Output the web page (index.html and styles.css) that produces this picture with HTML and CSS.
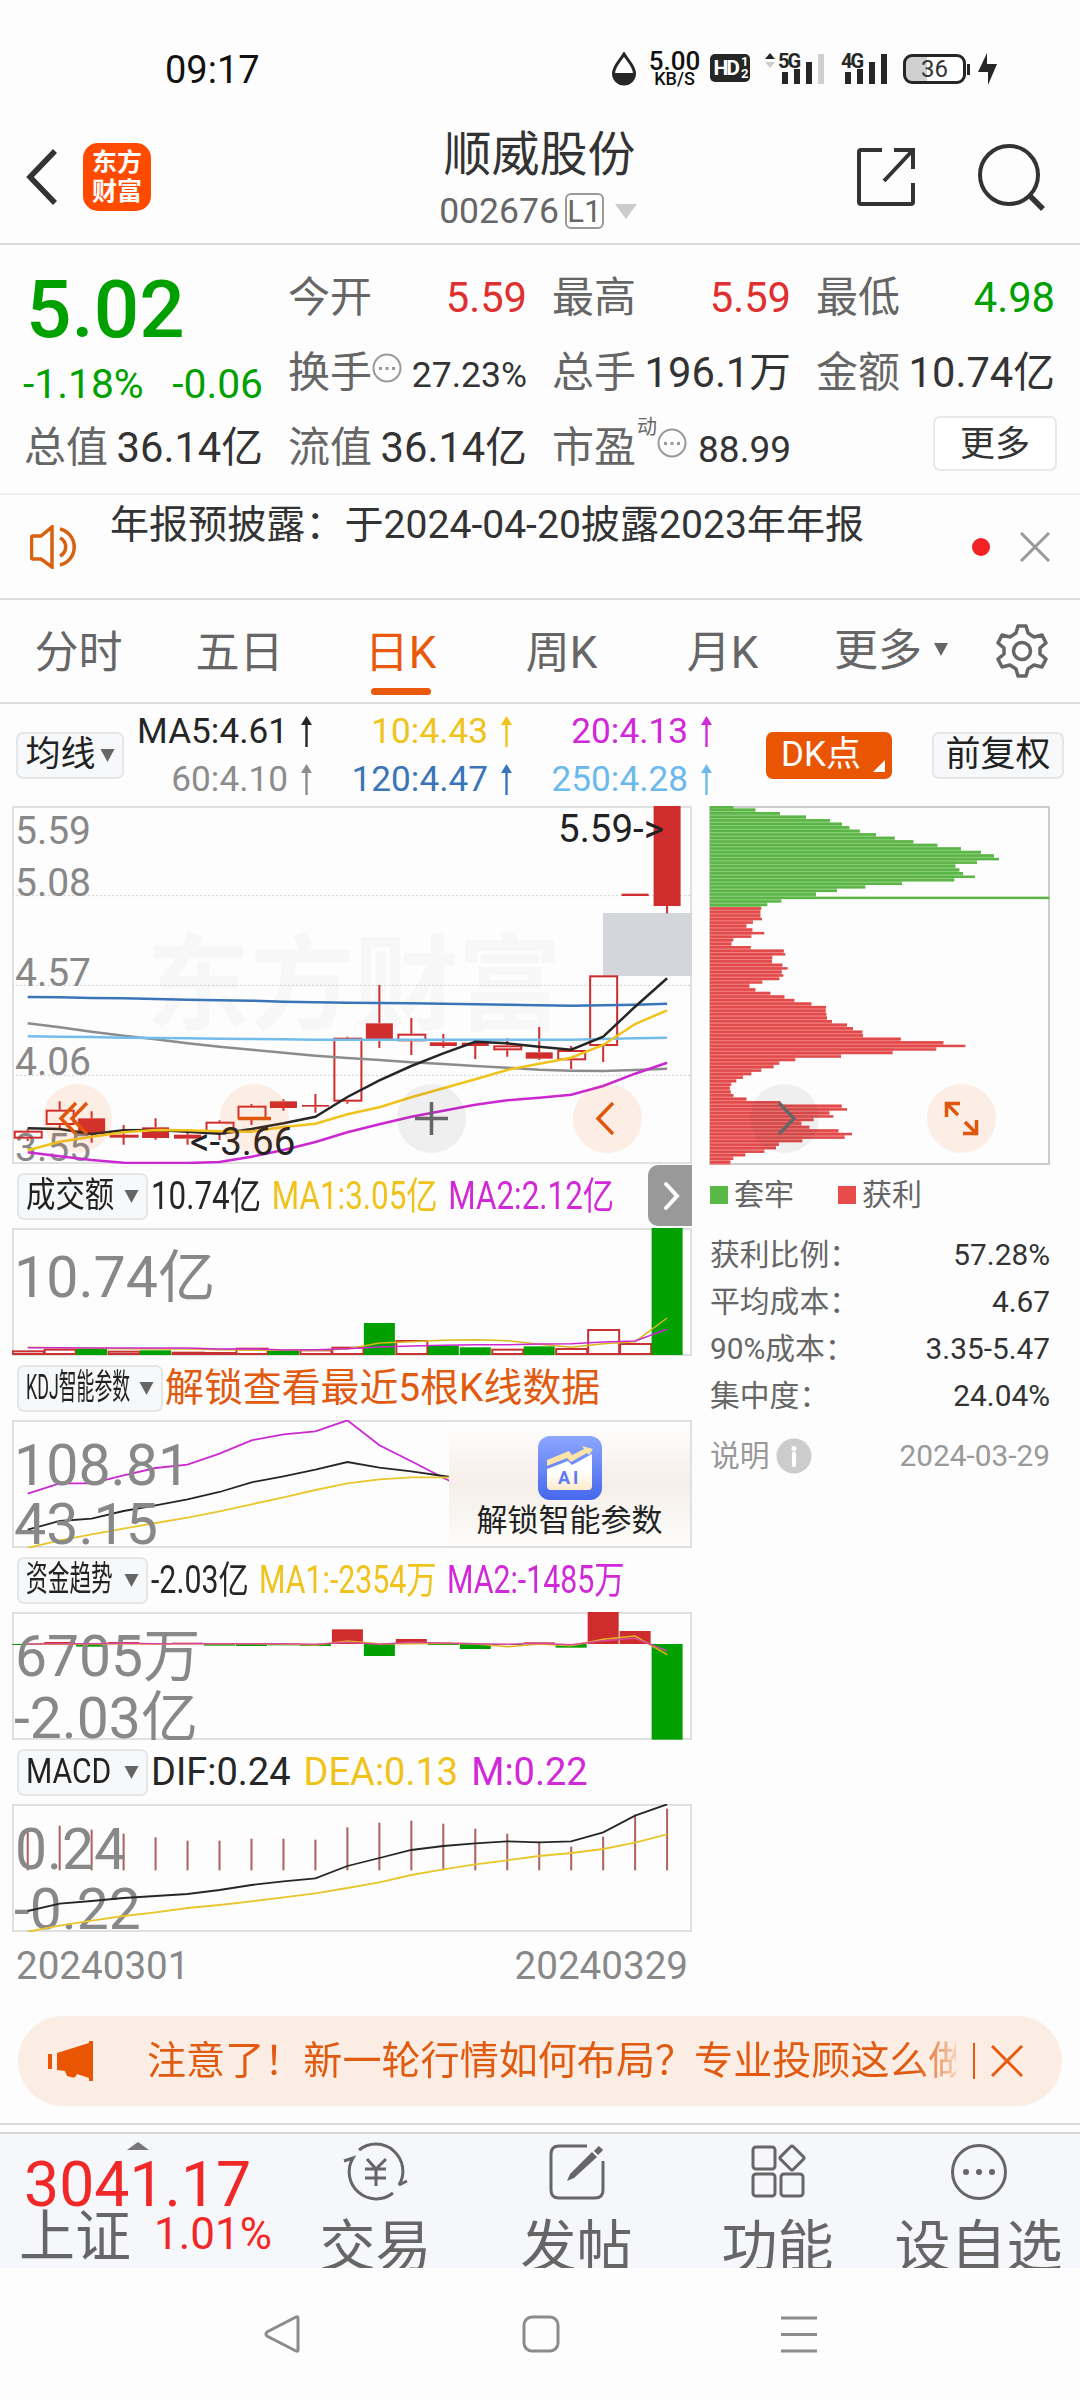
FILE: index.html
```
<!DOCTYPE html>
<html lang="zh-CN">
<head>
  <meta charset="UTF-8">
  <meta name="viewport" content="width=device-width, initial-scale=1.0">
  <title>顺威股份 002676</title>
  <link rel="stylesheet" href="styles.css">
</head>
<body>
  <!-- Status bar -->
  <div class="status-bar">
    <span class="clock">09:17</span>
    <div class="status-icons">
      <svg class="drop" width="26" height="34" viewBox="0 0 26 34">
        <path d="M13 2C9 9 2.500 14 2.500 21.500a10.500 10.500 0 0 0 21 0C23.500 14 17 9 13 2z" fill="#fff" stroke="#262626" stroke-width="3"/>
        <path d="M2 21h22a11 11 0 0 1-22 0z" fill="#262626"/>
      </svg>
      <div class="net-speed"><b>5.00</b><i>KB/S</i></div>
      <div class="hd">HD<span>1<br>2</span></div>
      <svg class="signal" width="62" height="34" viewBox="0 0 62 34">
        <path d="M0 7l5-6 5 6z" fill="#262626"/><path d="M0 10h10l-5 6z" fill="#ccc"/>
        <text x="13" y="16" class="net-text">5G</text>
        <path d="M17 20h6v12h-6zM29 17h6v15h-6zM41 10h6v22h-6z" fill="#262626"/><path d="M53 2h6v30h-6z" fill="#d0d0d0"/>
      </svg>
      <svg class="signal second" width="48" height="34" viewBox="0 0 48 34">
        <text x="0" y="16" class="net-text">4G</text>
        <path d="M4 20h6v12h-6zM16 17h6v15h-6zM28 10h6v22h-6zM40 2h6v30h-6z" fill="#262626"/>
      </svg>
      <div class="battery"><span>36</span></div>
      <svg class="bolt" width="20" height="32" viewBox="0 0 20 32"><path d="M9 0v11h10L10 32V19H0z" fill="#262626"/></svg>
    </div>
  </div>

  <!-- Title bar -->
  <header class="header">
    <div class="header-left">
      <svg width="34" height="60" viewBox="0 0 34 60"><path d="M31 4L6 30l25 26" fill="none" stroke="#333" stroke-width="5.500"/></svg>
      <div class="app-logo">东方<br>财富</div>
    </div>
    <div class="title">
      <h1>顺威股份</h1>
      <p>002676<span class="level">L1</span><svg width="22" height="15" viewBox="0 0 22 15"><path d="M0 0h22L11 15z" fill="#ccc"/></svg></p>
    </div>
    <div class="header-right">
      <svg width="60" height="60" viewBox="0 0 60 60" fill="none" stroke="#333" stroke-width="4">
        <path d="M26 3H5q-2 0-2 2v50q0 2 2 2h50q2 0 2-2V36M38 3h19v19M57 3L28 34"/>
      </svg>
      <svg width="68" height="70" viewBox="0 0 68 70" fill="none" stroke="#333" stroke-width="4">
        <circle cx="32" cy="33" r="29"/><path d="M53 54l13 13" stroke-width="5.500"/>
      </svg>
    </div>
  </header>

  <!-- Quote -->
  <section class="quote">
    <div class="price-cell">
      <div class="price">5.02</div>
      <div class="change"><span>-1.18%</span><span>-0.06</span></div>
    </div>
    <div class="cell"><label>今开</label><span class="up">5.59</span></div>
    <div class="cell"><label>最高</label><span class="up">5.59</span></div>
    <div class="cell"><label>最低</label><span class="down">4.98</span></div>
    <div class="cell"><label>换手<svg class="dots" width="30" height="30" viewBox="0 0 30 30"><circle cx="15" cy="15" r="13.500" fill="none" stroke="#999" stroke-width="2"/><path d="M7 14h3v3H7zM13.500 14h3v3h-3zM20 14h3v3h-3z" fill="#999"/></svg></label><span class="small">27.23%</span></div>
    <div class="cell"><label>总手</label><span>196.1万</span></div>
    <div class="cell"><label>金额</label><span>10.74亿</span></div>
    <div class="cell"><label>总值</label><span>36.14亿</span></div>
    <div class="cell"><label>流值</label><span>36.14亿</span></div>
    <div class="cell"><label>市盈<sup>动</sup><svg class="dots" width="30" height="30" viewBox="0 0 30 30"><circle cx="15" cy="15" r="13.500" fill="none" stroke="#999" stroke-width="2"/><path d="M7 14h3v3H7zM13.500 14h3v3h-3zM20 14h3v3h-3z" fill="#999"/></svg></label><span class="mid">88.99</span></div>
    <div class="cell more-cell"><button class="more">更多</button></div>
  </section>

  <!-- Notice -->
  <div class="notice">
    <svg class="speaker" width="52" height="44" viewBox="0 0 52 44" fill="none" stroke="#d9600f" stroke-width="3.500">
      <path d="M3 11h8L22 2v40L11 34H3q-1.500 0-1.500-1.500v-20Q1.500 11 3 11zM30 13a10 10 0 0 1 0 18M30 4a18.500 18.500 0 0 1 0 36"/>
    </svg>
    <p>年报预披露：于2024-04-20披露2023年年报</p>
    <i class="red-dot"></i>
    <svg width="30" height="30" viewBox="0 0 30 30"><path d="M1 1l28 28M29 1L1 29" stroke="#999" stroke-width="3"/></svg>
  </div>

  <!-- Period tabs -->
  <nav class="tabs">
    <a>分时</a>
    <a>五日</a>
    <a class="active">日K</a>
    <a>周K</a>
    <a>月K</a>
    <a class="tab-more">更多<svg width="14" height="13" viewBox="0 0 14 13"><path d="M0 0h14L7 13z" fill="#666"/></svg></a>
    <svg class="gear" width="52" height="54" viewBox="0 0 52 54" fill="none" stroke="#666" stroke-width="3.500">
      <path d="M22 2h8l2 7 6 4 8-2 4 8-6 5v6l6 5-4 8-8-2-6 4-2 7h-8l-2-7-6-4-8 2-4-8 6-5v-6l-6-5 4-8 8 2 6-4z" stroke-linejoin="round"/>
      <circle cx="26" cy="27" r="8.500"/>
    </svg>
  </nav>

  <!-- Moving averages -->
  <div class="ma-bar">
    <button class="chip">均线<svg width="15" height="13" viewBox="0 0 14 13"><path d="M0 0h14L7 13z" fill="#666"/></svg></button>
    <div class="ma-list">
      <span class="c-black">MA5:4.61<svg class="arrow"><use href="#up"/></svg></span>
      <span class="c-yellow">10:4.43<svg class="arrow"><use href="#up"/></svg></span>
      <span class="c-purple">20:4.13<svg class="arrow"><use href="#up"/></svg></span>
      <span class="c-gray">60:4.10<svg class="arrow"><use href="#up"/></svg></span>
      <span class="c-blue">120:4.47<svg class="arrow"><use href="#up"/></svg></span>
      <span class="c-sky">250:4.28<svg class="arrow"><use href="#up"/></svg></span>
    </div>
    <button class="chip dk">DK点</button>
    <button class="chip fq">前复权</button>
  </div>
  <svg width="0" height="0" class="defs">
    <symbol id="up" viewBox="0 0 11 31"><path d="M5.500 31V5" stroke="currentColor" stroke-width="2.400"/><path d="M0 9L5.500 0 11 9z" fill="currentColor"/></symbol>
  </svg>

  <!-- Charts -->
  <main class="charts">
    <div class="chart-left">
      <svg class="panel" id="kline" width="680" height="358"></svg>
      <div class="legend">
        <button class="chip"><span style="transform: scaleX(.84)">成交额</span><svg viewBox="0 0 14 13"><path d="M0 0h14L7 13z" fill="#666"/></svg></button>
        <p style="transform: scaleX(.825)"><span class="c-black">10.74亿</span><span class="c-yellow">MA1:3.05亿</span><span class="c-purple">MA2:2.12亿</span></p>
        <div class="side-tab"><svg width="18" height="30" viewBox="0 0 18 30"><path d="M3 3l11 12L3 27" fill="none" stroke="#fff" stroke-width="4" stroke-linecap="round"/></svg></div>
      </div>
      <svg class="panel" id="volume" width="680" height="128"></svg>
      <div class="legend">
        <button class="chip wide"><span style="transform: scaleX(.51)">KDJ智能参数</span><svg viewBox="0 0 14 13"><path d="M0 0h14L7 13z" fill="#666"/></svg></button>
        <p class="unlock">解锁查看最近5根K线数据</p>
      </div>
      <div class="kdj-wrap">
        <svg class="panel" id="kdj" width="680" height="128"></svg>
        <div class="ai-lock">
          <svg width="64" height="64" viewBox="0 0 64 64">
            <defs>
              <linearGradient id="aiBlue" x1="0" y1="0" x2="0" y2="1"><stop offset="0" stop-color="#8ca6ff"/><stop offset="1" stop-color="#4568ee"/></linearGradient>
              <linearGradient id="aiCard" x1="0" y1="0" x2="0" y2="1"><stop offset=".5" stop-color="#fff"/><stop offset="1" stop-color="#fdeac8"/></linearGradient>
            </defs>
            <rect width="64" height="64" rx="12" fill="url(#aiBlue)"/>
            <path d="M9 33l21-8 4 4 20-11v32q0 4-4 4H13q-4 0-4-4z" fill="url(#aiCard)"/>
            <path d="M9 24l22-9 3 4 12-6-2-3 11 3-4 6-2-2-16 9-4-4-20 8z" fill="#fce3a6"/>
            <text x="20" y="48" class="ai-text">AI</text>
          </svg>
          <p>解锁智能参数</p>
        </div>
      </div>
      <div class="legend">
        <button class="chip"><span style="transform: scaleX(.62)">资金趋势</span><svg viewBox="0 0 14 13"><path d="M0 0h14L7 13z" fill="#666"/></svg></button>
        <p style="transform: scaleX(.797)"><span class="c-black">-2.03亿</span><span class="c-yellow">MA1:-2354万</span><span class="c-purple">MA2:-1485万</span></p>
      </div>
      <svg class="panel" id="fund" width="680" height="128"></svg>
      <div class="legend">
        <button class="chip"><span style="transform: scaleX(.86)">MACD</span><svg viewBox="0 0 14 13"><path d="M0 0h14L7 13z" fill="#666"/></svg></button>
        <p><span class="c-black">DIF:0.24</span><span class="c-yellow">DEA:0.13</span><span class="c-purple">M:0.22</span></p>
      </div>
      <svg class="panel" id="macd" width="680" height="128"></svg>
      <div class="dates"><span>20240301</span><span>20240329</span></div>
    </div>

    <div class="chart-right">
      <svg class="chips" id="chips" width="341" height="359"></svg>
      <div class="chip-legend"><span><i class="sq green"></i>套牢</span><span><i class="sq red"></i>获利</span></div>
      <dl>
        <div><dt>获利比例：</dt><dd>57.28%</dd></div>
        <div><dt>平均成本：</dt><dd>4.67</dd></div>
        <div><dt>90%成本：</dt><dd>3.35-5.47</dd></div>
        <div><dt>集中度：</dt><dd>24.04%</dd></div>
        <div class="explain"><dt>说明<svg width="36" height="36" viewBox="0 0 36 36"><circle cx="18" cy="18" r="17.500" fill="#ccc"/><circle cx="18" cy="10.500" r="2.500" fill="#fff"/><path d="M18 15.500V27" stroke="#fff" stroke-width="4" stroke-linecap="round"/></svg></dt><dd>2024-03-29</dd></div>
      </dl>
    </div>

    <div class="chart-tools">
      <i><svg viewBox="0 0 69 69"><path d="M33 19L18 34.500 33 50M44 19L29 34.500 44 50"/></svg></i>
      <i><svg viewBox="0 0 69 69"><path d="M18 34.500h33"/></svg></i>
      <i class="gray"><svg viewBox="0 0 69 69"><path d="M18 34.500h33M34.500 18v33"/></svg></i>
      <i><svg viewBox="0 0 69 69"><path d="M40 19L25 34.500 40 50"/></svg></i>
      <i class="gray"><svg viewBox="0 0 69 69"><path d="M29 19l15 15.500L29 50"/></svg></i>
      <i><svg viewBox="0 0 69 69"><path d="M19.500 33V19.500H33M19.500 19.500L31 31M49.500 36v13.500H36M49.500 49.500L38 38"/></svg></i>
    </div>
  </main>

  <!-- Promo banner -->
  <div class="banner">
    <svg width="46" height="40" viewBox="0 0 46 40" fill="#ea5504"><path d="M0 13h4v15H0zM9 12L41 2V0h4v40h-4v-3l-12-4q-2 5-6 3l-4-1-2-5-8-1z"/></svg>
    <p>注意了！新一轮行情如何布局？专业投顾这么做</p>
    <i class="bar"></i>
    <svg width="32" height="32" viewBox="0 0 32 32"><path d="M1 1l30 30M31 1L1 31" stroke="#e8590c" stroke-width="3"/></svg>
  </div>

  <!-- Bottom toolbar -->
  <footer class="toolbar">
    <div class="index">
      <svg class="tri" width="22" height="8" viewBox="0 0 22 8"><path d="M0 8L11 0l11 8z" fill="#777"/></svg>
      <b>3041.17</b>
      <div><span>上证</span><em>1.01%</em></div>
    </div>
    <div class="tool">
      <svg width="68" height="60" viewBox="0 0 68 60" fill="none" stroke="#666" stroke-width="3">
        <path d="M17 8A27 27 0 0 1 57 43M2 19l9-3A27 27 0 0 0 51 51"/><path d="M57 43l8-4M25 17l9 10 10-10M34 27v17M23 27h21M23 36h21"/>
      </svg>
      <span>交易</span>
    </div>
    <div class="tool">
      <svg width="56" height="60" viewBox="0 0 56 60" fill="none" stroke="#666" stroke-width="3">
        <path d="M38 4H10q-8 0-8 8v36q0 8 8 8h36q8 0 8-8V19"/>
        <path d="M43 10l5 5-23 21-7 3 3-7z" fill="#666" stroke="none"/><path d="M47 11l5-5" stroke-width="6"/>
      </svg>
      <span>发帖</span>
    </div>
    <div class="tool">
      <svg width="56" height="60" viewBox="0 0 56 60" fill="none" stroke="#666" stroke-width="3">
        <rect x="3" y="5" width="22" height="22" rx="3"/><rect x="3" y="32" width="22" height="22" rx="3"/><rect x="31" y="32" width="22" height="22" rx="3"/><rect x="33" y="7" width="18" height="18" rx="2" transform="rotate(45 42 16)"/>
      </svg>
      <span>功能</span>
    </div>
    <div class="tool">
      <svg width="60" height="60" viewBox="0 0 60 60" fill="none" stroke="#666" stroke-width="3">
        <circle cx="30" cy="30" r="26.500"/><path d="M17 30h.01M30 30h.01M43 30h.01" stroke-width="6" stroke-linecap="round"/>
      </svg>
      <span>设自选</span>
    </div>
  </footer>

  <!-- System navigation -->
  <div class="system-nav">
    <svg viewBox="0 0 40 40"><path d="M35 4v32q0 2-2 1L4 22q-2-2 0-4L33 3q2-1 2 1z"/></svg>
    <svg viewBox="0 0 40 40"><rect x="3" y="3" width="34" height="34" rx="8"/></svg>
    <svg viewBox="0 0 40 40"><path d="M2 4h36M2 20.500h36M2 37h36"/></svg>
  </div>

  <script src="charts.js"></script>
</body>
</html>
```

FILE: styles.css
```
* {
  box-sizing: border-box;
}
body {
  margin: 0;
  width: 1080px;
  height: 2400px;
  overflow: hidden;
  background: #fdfdfd;
  color: #333;
  font-family: Roboto, "Noto Sans CJK SC", sans-serif;
}
h1, p, dl, dd {
  margin: 0;
}
svg {
  display: block;
  flex: none;
}
i, em {
  font-style: normal;
}
button {
  font-family: inherit;
  padding: 0;
}
.defs {
  position: absolute;
}
.c-black { color: #262626; }
.c-yellow { color: #f0c31c; }
.c-purple { color: #d128d8; }
.c-gray { color: #8c8c8c; }
.c-blue { color: #3a75b8; }
.c-sky { color: #6cb9ee; }

/* Status bar */
.status-bar {
  height: 110px;
  padding: 50px 82px 0 165px;
  display: flex;
  justify-content: space-between;
}
.clock {
  font-size: 38px;
  line-height: 41px;
  color: #111;
}
.status-icons {
  display: flex;
  align-items: flex-start;
  height: 40px;
  padding-top: 2px;
}
.net-speed {
  width: 53px;
  margin-left: 11px;
  text-align: center;
  color: #111;
}
.net-speed b {
  display: block;
  font-size: 26px;
  font-weight: 500;
  line-height: 18px;
}
.net-speed i {
  display: block;
  font-size: 18px;
  font-weight: 500;
  line-height: 18px;
}
.hd {
  display: flex;
  align-items: center;
  justify-content: center;
  width: 40px;
  height: 28px;
  margin: 2px 0 0 9px;
  border-radius: 5px;
  background: #262626;
  color: #fff;
  font-size: 21px;
  font-weight: 700;
  letter-spacing: -2px;
}
.hd span {
  margin-left: 3px;
  font-size: 13px;
  line-height: 12px;
}
.signal {
  margin-left: 15px;
}
.signal.second {
  margin-left: 14px;
}
.net-text {
  font-size: 20px;
  font-weight: 700;
  letter-spacing: -2px;
  fill: #262626;
}
.battery {
  position: relative;
  width: 63px;
  height: 30px;
  margin: 2px 12px 0 14px;
  border: 3px solid #262626;
  border-radius: 9px;
  background: linear-gradient(90deg, #d0d0d0 36%, #fff 36%);
  text-align: center;
  font-size: 24px;
  line-height: 25px;
}
.battery::after {
  content: "";
  position: absolute;
  right: -7px;
  top: 7px;
  width: 3px;
  height: 11px;
  background: #262626;
}
.bolt {
  margin-top: 1px;
}

/* Title bar */
.header {
  height: 135px;
  padding: 0 35px 0 24px;
  border-bottom: 2px solid #dcdcdc;
  display: flex;
  justify-content: space-between;
}
.header-left {
  display: flex;
  align-items: center;
  width: 210px;
}
.app-logo {
  width: 68px;
  height: 68px;
  margin-left: 25px;
  padding-top: 5px;
  border-radius: 15px;
  background: #ff4a00;
  color: #fff;
  text-align: center;
  font-size: 25px;
  font-weight: 700;
  line-height: 29px;
}
.title {
  text-align: center;
  margin-left: -11px;
}
.title h1 {
  margin-top: 15px;
  font-size: 48px;
  font-weight: 400;
  line-height: 60px;
}
.title p {
  display: flex;
  align-items: center;
  justify-content: center;
  height: 38px;
  margin: 7px 3px 0 0;
  font-size: 35.500px;
  color: #666;
}
.level {
  width: 39px;
  height: 36px;
  margin: 0 11px 0 6px;
  border: 2px solid #999;
  border-radius: 6px;
  font-size: 31px;
  line-height: 33px;
}
.header-right {
  display: flex;
  align-items: center;
  gap: 61px;
}

/* Quote */
.quote {
  display: grid;
  grid-template-columns: repeat(4, 239px);
  grid-auto-rows: 75px;
  column-gap: 25px;
  height: 250px;
  padding: 15px 25px 0 24px;
  border-bottom: 2px solid #eee;
}
.price-cell {
  grid-row: span 2;
  color: #00a000;
}
.price {
  font-size: 80px;
  font-weight: 500;
  line-height: 100px;
  text-indent: 2px;
}
.change {
  display: flex;
  justify-content: space-between;
  margin-left: -1px;
  font-size: 40.800px;
  line-height: 49px;
}
.cell {
  display: flex;
  justify-content: space-between;
  align-items: baseline;
  line-height: 75px;
  font-size: 41.700px;
  white-space: nowrap;
}
.cell label {
  display: flex;
  color: #666;
  font-size: 42px;
}
.cell .small {
  font-size: 35.500px;
}
.cell .mid {
  font-size: 37px;
}
.cell sup {
  width: 20px;
  margin-left: 1px;
  font-size: 20px;
  line-height: 34px;
  vertical-align: top;
}
.dots {
  margin-top: 18px;
}
.up { color: #e02f2f; }
.down { color: #00a000; }
.cell.more-cell {
  justify-content: flex-end;
  align-items: flex-start;
}
.more {
  width: 124px;
  height: 55px;
  margin: 6px -2px 0 0;
  border: 2px solid #e8e8e8;
  border-radius: 7px;
  background: #fff;
  color: #333;
  font-size: 35px;
  line-height: 53px;
}

/* Notice */
.notice {
  display: flex;
  align-items: center;
  height: 105px;
  padding: 0 30px;
  border-bottom: 2px solid #dcdcdc;
}
.notice p {
  flex: 1;
  align-self: flex-start;
  margin: 4px 0 0 28px;
  font-size: 39.100px;
  line-height: 52px;
}
.red-dot {
  width: 18px;
  height: 18px;
  margin-right: 30px;
  border-radius: 50%;
  background: #f22222;
}

/* Period tabs */
.tabs {
  display: flex;
  height: 104px;
  border-bottom: 2px solid #dcdcdc;
  font-size: 44px;
  line-height: 107px;
  color: #666;
}
.tabs a {
  position: relative;
  left: -2px;
  width: 161px;
  text-align: center;
}
.tabs .active {
  color: #e8590c;
}
.tabs .active::after {
  content: "";
  position: absolute;
  left: 51px;
  bottom: 7px;
  width: 60px;
  height: 7px;
  border-radius: 4px;
  background: #e8590c;
}
.tabs .tab-more {
  display: flex;
  align-items: center;
  justify-content: center;
  gap: 12px;
  width: 176px;
}
.tab-more svg {
  margin-bottom: 3px;
}
.gear {
  margin: 24px 0 0 15px;
}

/* Moving averages */
.ma-bar {
  display: flex;
  align-items: center;
  height: 102px;
  padding-left: 16px;
}
.chip {
  display: flex;
  flex: none;
  align-items: center;
  justify-content: center;
  height: 47px;
  border: 2px solid #e4e6ea;
  border-radius: 7px;
  background: #f7f8fa;
  color: #222;
  font-size: 35px;
  line-height: 42px;
  white-space: nowrap;
}
.ma-bar .chip {
  width: 108px;
  gap: 4px;
}
.ma-bar .dk {
  position: relative;
  width: 126px;
  margin-left: 54px;
  padding-right: 16px;
  border: none;
  background: #ea5504;
  color: #fff;
}
.dk::after {
  content: "";
  position: absolute;
  right: 7px;
  bottom: 7px;
  border: 6px solid;
  border-color: transparent #fff #fff transparent;
}
.ma-bar .fq {
  width: 132px;
  margin-left: 40px;
}
.ma-list {
  display: grid;
  grid-template-columns: 188px 200px 200px;
  grid-auto-rows: 48px;
  font-size: 35.200px;
  line-height: 48px;
}
.ma-list span {
  display: flex;
  align-items: center;
  justify-content: flex-end;
}
.arrow {
  width: 11px;
  height: 31px;
  margin-left: 13px;
}

/* Charts */
.charts {
  position: relative;
  display: flex;
  justify-content: space-between;
  height: 1210px;
  padding: 0 29px 0 12px;
}
.chart-left {
  width: 680px;
}
.panel {
  box-shadow: inset 0 0 0 2px #e0e0e0;
}
.panel text {
  fill: #888;
}
.panel .mark {
  fill: #222;
}
.panel .watermark {
  fill: #f7f7f7;
  font-weight: 700;
}
.legend {
  display: flex;
  align-items: center;
  height: 64px;
  position: relative;
  padding-left: 5px;
}
.legend .chip {
  width: 131px;
  justify-content: space-between;
  padding: 0 7px;
}
.legend .chip.wide {
  width: 146px;
}
.legend .chip span {
  width: 80px;
  transform-origin: left;
  text-align: left;
}
.legend .chip svg {
  width: 15px;
  height: 13px;
}
.legend p {
  display: flex;
  gap: 13px;
  margin-left: 3px;
  font-size: 38px;
  line-height: 60px;
  transform-origin: left;
  white-space: nowrap;
}
.legend .unlock {
  font-size: 38.900px;
  color: #e05a10;
  margin-left: 2px;
}
.side-tab {
  position: absolute;
  right: 0;
  top: 1px;
  width: 44px;
  height: 61px;
  padding: 16px 0 0 15px;
  border-radius: 10px 0 0 10px;
  background: #999;
}
.kdj-wrap {
  position: relative;
}
.ai-lock {
  position: absolute;
  left: 437px;
  top: 2px;
  width: 241px;
  height: 124px;
  padding-top: 14px;
  background: linear-gradient(#fefefe, #f6eee9 50%, #f8f6f2 75%, #fdfcfa);
  text-align: center;
}
.ai-lock svg {
  margin: 0 auto;
}
.ai-lock p {
  font-size: 31px;
  line-height: 42px;
  color: #222;
}
.ai-text {
  font-size: 18px;
  font-weight: 700;
  letter-spacing: 3px;
}
.ai-lock .ai-text {
  fill: #5a7cf0;
}
.dates {
  display: flex;
  justify-content: space-between;
  padding: 11px 4px 0;
  font-size: 38.600px;
  line-height: 46px;
  color: #888;
}
.chart-right {
  width: 342px;
}
.chips {
  box-shadow: inset 0 0 0 2px #ccc;
}
.chip-legend {
  display: flex;
  height: 60px;
  padding-left: 1px;
  font-size: 30px;
  line-height: 60px;
  color: #666;
}
.chip-legend span {
  display: flex;
  align-items: center;
  width: 128px;
}
.sq {
  width: 18px;
  height: 18px;
  margin-right: 6px;
}
.sq.green { background: #5ab946; }
.sq.red { background: #e94b4b; }
.chart-right dl {
  padding: 6px 1px 0 1px;
  font-size: 29.800px;
  line-height: 47px;
  color: #666;
}
.chart-right dl div {
  display: flex;
  justify-content: space-between;
}
.chart-right dd {
  color: #333;
}
.chart-right .explain {
  margin-top: 13px;
}
.explain dt {
  display: flex;
  align-items: center;
  gap: 6px;
}
.explain dt, .chart-right .explain dd {
  color: #999;
}
.chart-tools {
  position: absolute;
  left: 43px;
  top: 278px;
  display: flex;
  gap: 107.800px;
}
.chart-tools i {
  width: 69px;
  height: 69px;
  border-radius: 50%;
  background: rgba(250, 100, 20, .1);
}
.chart-tools svg {
  fill: none;
  stroke: #e0560c;
  stroke-width: 3.500;
}
.chart-tools .gray {
  background: rgba(60, 60, 60, .07);
}
.chart-tools .gray svg {
  stroke: #666;
}

/* Promo banner */
.banner {
  display: flex;
  align-items: center;
  width: 1044px;
  height: 90px;
  margin: 0 18px;
  padding: 0 39px 0 30px;
  border-radius: 45px;
  background: #fcede4;
  color: #e05a10;
}
.banner p {
  width: 811px;
  margin-left: 53px;
  overflow: hidden;
  font-size: 39.100px;
  line-height: 60px;
  white-space: nowrap;
  -webkit-mask-image: linear-gradient(90deg, #000 95%, rgba(0, 0, 0, .2));
  mask-image: linear-gradient(90deg, #000 95%, rgba(0, 0, 0, .2));
}
.banner .bar {
  width: 2px;
  height: 36px;
  margin: 0 16px 0 17px;
  background: #e05a10;
}

/* Bottom toolbar */
.toolbar {
  display: flex;
  height: 145px;
  margin-top: 17px;
  padding-top: 8px;
  border-top: 2px solid #dcdcdc;
  background: linear-gradient(#fdfdfd 7px, #d4d6d8 7px, #d4d6d8 9px, #f6f7fa 9px);
  overflow: hidden;
  color: #666;
}
.index {
  width: 275px;
  padding-left: 19px;
}
.index .tri {
  margin: 9px 0 0 108px;
}
.index b {
  display: block;
  margin: 1px 0 0 5px;
  font-size: 62.500px;
  font-weight: 400;
  line-height: 68px;
  color: #f02828;
}
.index div {
  display: flex;
  align-items: baseline;
  margin-top: -15px;
  font-size: 56px;
  line-height: 66px;
}
.index em {
  margin-left: 23px;
  font-size: 44px;
  color: #f02828;
  position: relative;
  top: -7px;
}
.tool {
  display: flex;
  flex-direction: column;
  align-items: center;
  width: 201px;
  padding-top: 9px;
  font-size: 56px;
  line-height: 90px;
  white-space: nowrap;
}

/* System navigation */
.system-nav {
  display: flex;
  gap: 218px;
  padding: 46px 0 0 263px;
}
.system-nav svg {
  width: 40px;
  height: 40px;
  fill: none;
  stroke: #8c8c8c;
  stroke-width: 3;
}
```

FILE: charts.js
```
// 21 trading days, one column each
var FIRST = 15.7, STEP = 31.97;
var RED = '#cf2d2d', GREEN = '#00a000', YELLOW = '#f0c31c', PURPLE = '#cc28d2', BLACK = '#262626';

function Chart(id, top) {
  this.html = '';
  this.el = document.getElementById(id);
  this.top = top;
}
// levels are stored in thirds of a pixel
Chart.prototype.y = function (v) { return (v - this.top) / 3; };
Chart.prototype.x = function (i) { return FIRST + STEP * i; };
Chart.prototype.line = function (values, color, width) {
  var self = this;
  var pts = values.map(function (v, i) { return self.x(i).toFixed(1) + ',' + self.y(v).toFixed(1); });
  this.html += '<polyline points="' + pts.join(' ') + '" fill="none" stroke="' + color + '" stroke-width="' + width + '"/>';
};
Chart.prototype.box = function (x, y, w, h, fill, stroke) {
  this.html += '<rect x="' + x + '" y="' + y + '" width="' + w + '" height="' + Math.max(h, 1) + '" fill="' + fill + '"' +
    (stroke ? ' stroke="' + stroke + '" stroke-width="2"' : '') + '/>';
};
Chart.prototype.text = function (x, y, size, str, cls) {
  this.html += '<text x="' + x + '" y="' + y + '" font-size="' + size + '" class="' + (cls || '') + '">' + str + '</text>';
};
Chart.prototype.draw = function () { this.el.innerHTML = this.html; };

// Candles: [hollow, open/close top, bottom, high, low]
var k = new Chart('kline', 48);
k.text(134, 216, 104, '东方财富', 'watermark');
[317, 586, 856].forEach(function (v) {
  k.html += '<path d="M0 ' + k.y(v) + 'h680" stroke="#d0d0d0" stroke-dasharray="2 2"/>';
});
k.text(3, 38, 39, '5.59');
k.text(3, 90, 39, '5.08');
k.text(3, 180, 39, '4.57');
k.text(3, 269, 39, '4.06');
k.text(3, 355, 39, '3.55');
k.box(591, 107, 89, 63, '#d3d7dc');
[
  [1, 1022, 1046, 1016, 1053], [1, 959, 1005, 934, 1015], [0, 985, 1031, 964, 1058], [1, 1034, 1040, 1005, 1064],
  [0, 1012, 1044, 985, 1049], [0, 1034, 1046, 1026, 1064], [1, 995, 1030, 991, 1050], [1, 947, 987, 942, 1005],
  [0, 934, 954, 928, 962], [0, 945, 950, 912, 968], [1, 743, 935, 740, 941], [0, 700, 747, 585, 774],
  [1, 731, 754, 684, 795], [0, 757, 768, 732, 773], [0, 758, 768, 755, 807], [1, 766, 781, 745, 800],
  [0, 787, 806, 711, 810], [1, 780, 811, 768, 837], [1, 556, 768, 556, 816], [0, 311, 318, 311, 318], [0, 48, 348, 48, 370]
].forEach(function (c, i) {
  var x = k.x(i), t = k.y(c[1]), b = k.y(c[2]);
  k.html += '<path d="M' + x + ' ' + k.y(c[3]) + 'V' + t + 'M' + x + ' ' + b + 'V' + k.y(c[4]) + '" stroke="' + RED + '" stroke-width="2"/>';
  if (c[0]) k.box(x - 13, t + 1, 27, b - t - 2, 'none', RED);
  else k.box(x - 13.500, t, 27, b - t, RED);
});
k.line([621, 622, 624, 625, 627, 629, 631, 632, 635, 637, 638, 639, 640, 641, 643, 644, 646, 647, 646, 644, 641], '#3a75b8', 2.5);
k.line([700, 712, 725, 737, 748, 760, 770, 779, 788, 797, 804, 810, 817, 822, 828, 833, 839, 842, 843, 840, 836], '#8c8c8c', 2.5);
k.line([739, 740, 741, 743, 744, 745, 746, 747, 748, 749, 749, 749, 749, 749, 749, 749, 749, 749, 747, 745, 743], '#74bdea', 2.5);
k.line([1087, 1099, 1110, 1118, 1119, 1119, 1116, 1100, 1080, 1056, 1027, 1003, 980, 962, 944, 931, 923, 914, 888, 851, 818], PURPLE, 2.5);
k.line([1015, 1017, 1032, 1021, 1020, 1025, 1031, 1017, 1000, 980, 921, 871, 828, 790, 755, 760, 770, 779, 740, 650, 565], BLACK, 2.5);
k.line([1081, 1055, 1040, 1027, 1020, 1021, 1024, 1025, 1011, 1001, 973, 952, 922, 895, 868, 840, 821, 803, 765, 702, 661], YELLOW, 2.5);
k.text(546, 36, 38.500, '5.59-&gt;', 'mark');
k.text(178, 349, 38.500, '&lt;-3.66', 'mark');
k.draw();

// Turnover
var v = new Chart('volume', 204);
[
  [1, 571], [1, 566], [0, 567], [1, 572], [0, 571], [1, 575], [1, 576], [1, 563], [0, 573], [1, 568], [1, 560],
  [0, 489], [1, 540], [0, 557], [0, 562], [1, 566], [0, 559], [1, 564], [1, 507], [1, 549], [0, 204]
].forEach(function (b, i) {
  var x = v.x(i), t = v.y(b[1]);
  if (b[0]) v.box(x - 15, t + 1, 31, 125 - t, '#fff', '#c83232');
  else v.box(x - 15.500, t, 31, 127 - t, GREEN);
});
v.text(2, 69, 57.300, '10.74亿');
v.line([562, 563, 565, 566, 567, 567, 569, 571, 571, 571, 567, 549, 545, 541, 539, 542, 553, 562, 551, 545, 474], '#d8b81c', 1.5);
v.line([563, 563, 564, 564, 564, 564, 567, 566, 570, 569, 566, 561, 558, 556, 554, 554, 552, 551, 546, 543, 508], PURPLE, 1.5);
v.draw();

// KDJ, covered by the unlock card on the right
var j = new Chart('kdj', 779);
j.line([1000, 969, 969, 945, 923, 913, 880, 840, 822, 813, 780, 855, 903, 952, 1000], PURPLE, 1.8);
j.line([1108, 1082, 1075, 1052, 1035, 1017, 995, 966, 948, 928, 905, 922, 933, 947, 960], BLACK, 1.8);
j.line([1163, 1140, 1122, 1105, 1088, 1072, 1053, 1032, 1011, 989, 969, 957, 951, 951, 953], '#e8c62c', 1.8);
j.text(2, 65, 57.300, '108.81');
j.text(2, 124, 57.300, '43.15');
j.draw();

// Fund flow around the zero line
var f = new Chart('fund', 186);
[284, 276, 290, 276, 280, 278, 287, 288, 286, 288, 238, 318, 267, 285, 297, 284, 277, 293, 186, 243, 569].forEach(function (b, i) {
  var t = Math.min(b, 282), h = Math.abs(b - 282) / 3;
  f.box(f.x(i) - 15.500, f.y(t), 31, h, b < 282 ? RED : GREEN);
});
f.text(3, 64, 57, '6705万');
f.text(2, 126, 57, '-2.03亿');
f.line([283, 283, 282, 281, 281, 281, 281, 281, 282, 285, 273, 281, 281, 280, 281, 290, 282, 287, 268, 258, 314], '#e0b81c', 1.5);
f.line([282, 281, 281, 280, 281, 281, 281, 281, 281, 283, 277, 283, 277, 279, 281, 283, 280, 284, 272, 265, 303], '#d8489c', 1.5);
f.draw();

// MACD
var m = new Chart('macd', 761);
[845, 826, 838, 850, 861, 871, 871, 865, 865, 868, 831, 817, 811, 820, 835, 850, 874, 889, 859, 793, 775].forEach(function (b, i) {
  m.box(m.x(i) - 1, m.y(b), 2, (960 - b) / 3, '#b0605c');
});
m.text(3, 64.500, 57, '0.24');
m.text(2, 124.500, 57, '-0.22');
m.line([1082, 1060, 1052, 1043, 1037, 1031, 1019, 1004, 993, 984, 947, 923, 899, 887, 879, 873, 876, 873, 846, 796, 762], BLACK, 1.8);
m.line([1144, 1126, 1111, 1097, 1086, 1073, 1064, 1053, 1041, 1029, 1013, 996, 974, 957, 942, 930, 917, 908, 896, 877, 852], '#e8c62c', 1.8);
m.draw();

// Cost distribution
var c = new Chart('chips', 48);
var trapped = 29;
[
  132, 198, 272, 350, 422, 458, 480, 511, 560, 616, 672, 744, 815, 875, 914, 929, 863, 798, 810, 821, 857, 795, 638, 528, 443,
  380, 1080, 276, 234, 216, 213, 213, 218, 191, 171, 189, 225, 186, 132, 126, 184, 283, 288, 249, 248, 279, 295, 277, 282, 270,
  219, 180, 198, 243, 285, 315, 366, 410, 409, 411, 413, 428, 473, 491, 519, 521, 634, 762, 828, 741, 610, 455, 318, 270, 253,
  216, 186, 161, 141, 126, 121, 124, 132, 171, 273, 457, 473, 420, 432, 373, 336, 360, 447, 488, 466, 339, 269, 260, 225, 168, 132, 123
].forEach(function (end, i, all) {
  var w = (end - 62) / 3, y = Math.max(i * 3.525 - 1, 0), green = i < trapped;
  var gap = (Math.min(end, all[i + 1] || end) - 62) / 3;
  c.box(1, y, gap, 3.7, green ? '#8ed07c' : '#f58080');
  c.box(1, y, w, 2.5, green ? '#5ab446' : '#e04a4a');
});
c.draw();
```
